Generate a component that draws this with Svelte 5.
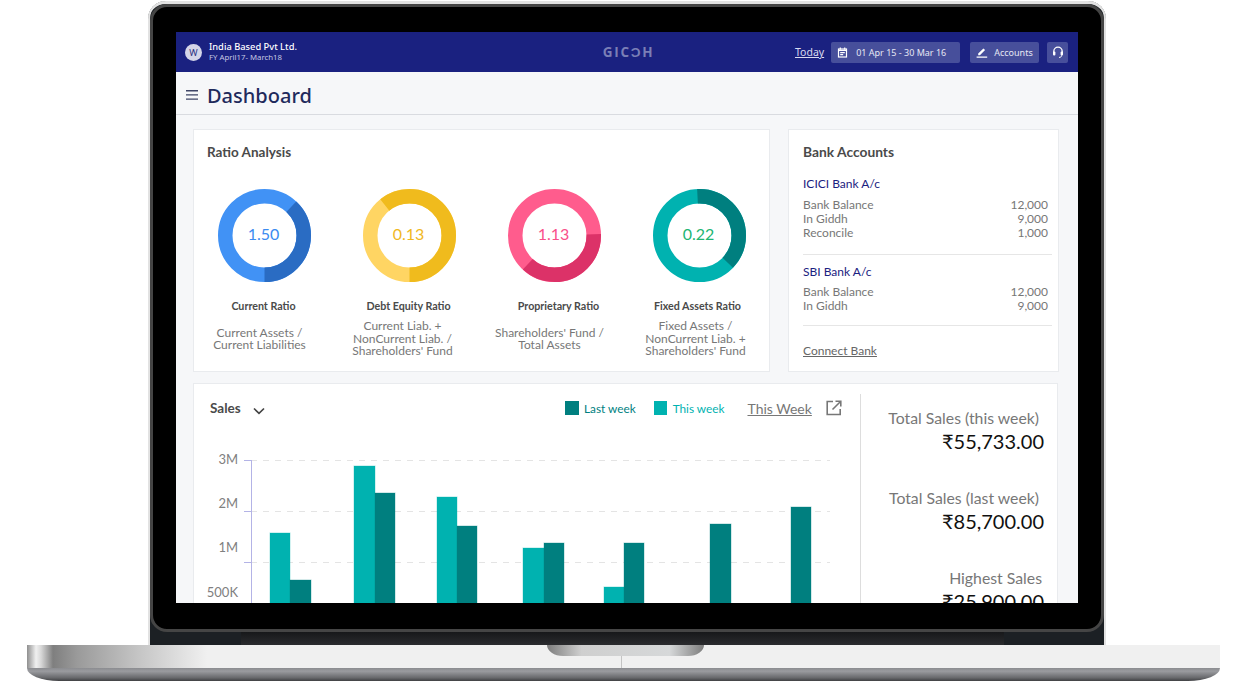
<script lang="ts">
	const ratios = [
		{ name: 'Current Ratio', value: '1.50', color: '#3b8bf0', light: '#4192f5', dark: '#2a6cc3', from: 43, to: 180, nameShift: -1, shift: -5, sub: ['Current Assets /', 'Current Liabilities'] },
		{ name: 'Debt Equity Ratio', value: '0.13', color: '#f0b81f', light: '#ffd563', dark: '#f0bb1d', from: 321, to: 540, nameShift: -1, shift: -7, sub: ['Current Liab. +', 'NonCurrent Liab. /', "Shareholders' Fund"] },
		{ name: 'Proprietary Ratio', value: '1.13', color: '#f9508a', light: '#ff5c8d', dark: '#dc3268', from: 88, to: 223, nameShift: 4, shift: -5, sub: ["Shareholders' Fund /", 'Total Assets'] },
		{ name: 'Fixed Assets Ratio', value: '0.22', color: '#22b573', light: '#00b2b0', dark: '#007f7f', from: 357, to: 494, nameShift: -2, shift: -4, sub: ['Fixed Assets /', 'NonCurrent Liab. +', "Shareholders' Fund"] }
	];

	const banks = [
		{ name: 'ICICI Bank A/c', rows: [['Bank Balance', '12,000'], ['In Giddh', '9,000'], ['Reconcile', '1,000']] },
		{ name: 'SBI Bank A/c', rows: [['Bank Balance', '12,000'], ['In Giddh', '9,000']] }
	];

	// x position and top of each bar, in chart coordinates
	const bars = [
		{ x: 76, y: 103, w: 20, c: '#00b2b0' },
		{ x: 96, y: 150, w: 21, c: '#007f7f' },
		{ x: 160, y: 36, w: 21, c: '#00b2b0' },
		{ x: 181, y: 63, w: 20, c: '#007f7f' },
		{ x: 243, y: 67, w: 20, c: '#00b2b0' },
		{ x: 263, y: 96, w: 20, c: '#007f7f' },
		{ x: 329, y: 118, w: 21, c: '#00b2b0' },
		{ x: 350, y: 113, w: 20, c: '#007f7f' },
		{ x: 410, y: 157, w: 20, c: '#00b2b0' },
		{ x: 430, y: 113, w: 20, c: '#007f7f' },
		{ x: 516, y: 94, w: 21, c: '#007f7f' },
		{ x: 597, y: 77, w: 20, c: '#007f7f' }
	];

	const axis = [
		{ label: '3M', text: 34, tick: 30 },
		{ label: '2M', text: 78, tick: 81 },
		{ label: '1M', text: 122, tick: 132 },
		{ label: '500K', text: 167 }
	];

	const totals = [
		{ label: 'Total Sales (this week)', amount: '₹55,733.00', inset: 5 },
		{ label: 'Total Sales (last week)', amount: '₹85,700.00', inset: 5 },
		{ label: 'Highest Sales', amount: '₹25,900.00', inset: 2 }
	];
</script>

<div class="device">
	<div class="lid">
		<div class="bezel">
			<div class="screen">
				<header class="topbar">
					<div class="company">
						<span class="avatar">W</span>
						<div>
							<div class="company-name">India Based Pvt Ltd.</div>
							<div class="company-fy">FY April17- March18</div>
						</div>
					</div>
					<div class="logo">GICƆH</div>
					<div class="actions">
						<span class="today">Today</span>
						<span class="btn date">
							<svg width="11" height="11" viewBox="0 0 11 11" fill="none" stroke="#fff" stroke-width="1.2">
								<rect x="1.5" y="2" width="8" height="8" />
								<path d="M1.5 3.4h8M3.3 .6v2M7.7 .6v2M3.2 5.6h4.6M3.2 7.6h3" />
							</svg>
							01 Apr 15 - 30 Mar 16
						</span>
						<span class="btn accounts">
							<svg width="12" height="11" viewBox="0 0 12 11" fill="#fff">
								<path d="M.6 9.6h10.6v1.1H.6zM2.2 6.6 7.4 1.4l1.7 1.7-5.2 5.2H2.2z" />
							</svg>
							Accounts
						</span>
						<span class="btn help">
							<svg width="12" height="13" viewBox="0 0 12 13" fill="none">
								<path d="M1.8 7V5.4a4.2 4.2 0 0 1 8.4 0V7" stroke="#fff" stroke-width="1.3" />
								<rect x="1" y="5.6" width="2.4" height="4" rx="1" fill="#fff" />
								<rect x="8.6" y="5.6" width="2.4" height="4" rx="1" fill="#fff" />
								<path d="M9.6 9.4c0 1.4-1 2-2.6 2" stroke="#fff" stroke-width="1" />
							</svg>
						</span>
					</div>
				</header>

				<div class="subbar">
					<svg width="12" height="10" viewBox="0 0 12 10" fill="#3d4466">
						<path d="M0 0h12v1.4H0zM0 4.2h12v1.4H0zM0 8.4h12v1.4H0z" />
					</svg>
					<h1>Dashboard</h1>
				</div>

				<main class="content">
					<section class="card ratio-card">
						<h2>Ratio Analysis</h2>
						<div class="ratios">
							{#each ratios as r}
								<div class="ratio">
									<svg class="donut" width="93" height="93" viewBox="0 0 93 93" fill="none">
										<circle cx="46.5" cy="46.5" r="39.25" stroke={r.light} stroke-width="14.5" />
										<circle
											cx="46.5"
											cy="46.5"
											r="39.25"
											stroke={r.dark}
											stroke-width="14.5"
											pathLength="360"
											stroke-dasharray="{r.to - r.from} {360 - (r.to - r.from)}"
											stroke-dashoffset={-r.from}
											transform="rotate(-90 46.5 46.5)"
										/>
										<text x="45.5" y="51" text-anchor="middle" fill={r.color}>{r.value}</text>
									</svg>
									<div class="ratio-name" style="transform: translateX({r.nameShift}px)">{r.name}</div>
									<div class="ratio-sub" style="transform: translateX({r.shift}px)">
										{#each r.sub as line}
											<div>{line}</div>
										{/each}
									</div>
								</div>
							{/each}
						</div>
					</section>

					<section class="card bank-card">
						<h2>Bank Accounts</h2>
						{#each banks as bank}
							<div class="bank">
								<div class="bank-name">{bank.name}</div>
								{#each bank.rows as row}
									<div class="bank-row"><span>{row[0]}</span><span>{row[1]}</span></div>
								{/each}
							</div>
						{/each}
						<span class="connect">Connect Bank</span>
					</section>

					<section class="card sales-card">
						<div class="sales-main">
							<div class="sales-head">
								<span class="sales-title">Sales</span>
								<svg class="chevron" width="12" height="8" viewBox="0 0 12 8" fill="none" stroke="#444" stroke-width="1.7">
									<path d="M1 1.5 6 6.3l5-4.8" />
								</svg>
								<div class="legend">
									<span class="swatch last"></span><span class="legend-last">Last week</span>
									<span class="swatch this"></span><span class="legend-this">This week</span>
								</div>
								<span class="range">This Week</span>
								<svg class="open" width="16" height="16" viewBox="0 0 16 16" fill="none" stroke="#777" stroke-width="1.6">
									<path d="M7 1.5H1.2v13h13V9M6.5 9.5 14.3 1.7M9.5 1.2h5.3v5.3" />
								</svg>
							</div>
							<svg class="chart" width="666" height="180" viewBox="0 0 666 180">
								{#each axis as a}
									<text class="axis-label" x="44" y={a.text} text-anchor="end">{a.label}</text>
									{#if a.tick}
										<line x1="57" x2="636" y1={a.tick + 0.5} y2={a.tick + 0.5} stroke="#e4e4e4" stroke-dasharray="6 6" />
										<line x1="50" x2="57" y1={a.tick + 0.5} y2={a.tick + 0.5} stroke="#b3b3e6" />
									{/if}
								{/each}
								<line x1="57.5" x2="57.5" y1="30" y2="180" stroke="#b3b3e6" />
								{#each bars as b}
									<rect x={b.x} y={b.y} width={b.w} height={180 - b.y} fill={b.c} stroke={b.c} stroke-opacity="0.35" />
								{/each}
							</svg>
						</div>
						<aside class="totals">
							{#each totals as t}
								<div class="total">
									<div class="total-label" style="margin-right: {t.inset}px">{t.label}</div>
									<div class="total-amount">{t.amount}</div>
								</div>
							{/each}
						</aside>
					</section>
				</main>
			</div>
		</div>
		<div class="hinge"></div>
	</div>
	<div class="base">
		<div class="notch"></div>
		<div class="base-top"><span class="seam"></span></div>
		<div class="base-bottom"></div>
	</div>
</div>

<style>
	:global(body) {
		margin: 0;
		background: #fff;
	}

	.device {
		width: 1248px;
		height: 700px;
		overflow: hidden;
		font-family: Lato, sans-serif;
	}

	.lid {
		box-sizing: border-box;
		width: 958px;
		height: 644px;
		margin: 1px 0 0 148px;
		padding: 3px 2px 0;
		background: #1c2024;
		border-radius: 18px 18px 0 0;
		box-shadow: inset 2px 0 0 #e2e2e2, inset -2px 0 0 #e2e2e2, inset 0 3px 0 #e2e2e2;
	}

	.bezel {
		box-sizing: border-box;
		height: 628px;
		padding: 25px 23px 0;
		background: #000;
		border: 3px solid #454545;
		border-radius: 17px;
	}

	.screen {
		width: 902px;
		height: 571px;
		overflow: hidden;
		background: #f6f7f9;
	}

	.hinge {
		height: 13px;
		margin: 0 100px 0 91px;
		background: linear-gradient(#17181a, #2a2b2e);
	}

	.base {
		position: relative;
		width: 1193px;
		margin-left: 27px;
	}

	.base-top {
		position: relative;
		height: 23px;
		background: linear-gradient(90deg, #8f8f8f 0, #f0f0f0 9px, #d8d8d8 14px, #7f7f7f 26px, #9a9a9a 50px, #c4c4c4 110px, #f0f0f0 180px);
	}

	.base-bottom {
		height: 13px;
		background: linear-gradient(#8b8c90 0, #9a9b9f 25%, #68696c 75%, #3f4043 100%);
		border-radius: 0 0 32px 32px / 0 0 13px 13px;
	}

	.notch {
		position: absolute;
		z-index: 1;
		top: 0;
		left: 520px;
		width: 157px;
		height: 11px;
		background: linear-gradient(90deg, #7d7d7d, #cfcfcf 22%, #d6d8d9 78%, #7d7d7d);
		border-radius: 0 0 16px 16px / 0 0 11px 11px;
	}

	.seam {
		position: absolute;
		left: 594px;
		top: 11px;
		width: 1px;
		height: 12px;
		background: #c4c4c4;
	}

	.topbar {
		display: flex;
		align-items: center;
		justify-content: space-between;
		height: 40px;
		padding: 0 9px 0 9px;
		background: #1a2180;
		font-family: 'Noto Sans', sans-serif;
		color: #fff;
	}

	.company {
		display: flex;
		align-items: center;
		gap: 7px;
		width: 276px;
	}

	.avatar {
		display: flex;
		align-items: center;
		justify-content: center;
		width: 17px;
		height: 17px;
		border-radius: 50%;
		background: #d4d5e8;
		color: #2a3080;
		font-size: 9px;
	}

	.company-name {
		font-size: 9.3px;
		font-weight: 500;
		line-height: 11px;
	}

	.company-fy {
		font-size: 7.8px;
		line-height: 11px;
		color: #c6c8e2;
	}

	.logo {
		font-family: 'Open Sans', sans-serif;
		font-size: 13.5px;
		font-weight: 700;
		letter-spacing: 1.7px;
		color: #7a7fb6;
	}

	.actions {
		display: flex;
		align-items: center;
		width: 273px;
		font-size: 9px;
	}

	.today {
		margin: 0 7px 0 -1px;
		font-size: 10.5px;
		color: #d9dbf0;
		text-decoration: underline;
	}

	.btn {
		box-sizing: border-box;
		display: flex;
		align-items: center;
		height: 21px;
		background: #474f9b;
		border-radius: 2px;
		color: #e6e7f4;
	}

	.date {
		gap: 8px;
		width: 129px;
		padding-left: 6px;
	}

	.accounts {
		gap: 6px;
		width: 69px;
		margin: 0 8px 0 10px;
		padding-left: 6px;
	}

	.help {
		justify-content: center;
		width: 21px;
	}

	.subbar {
		box-sizing: border-box;
		display: flex;
		align-items: center;
		gap: 9px;
		height: 43px;
		padding: 4px 0 0 10px;
		border-bottom: 1px solid #d9dbe0;
	}

	h1 {
		margin: 0;
		font-family: 'Noto Sans', sans-serif;
		font-size: 20px;
		font-weight: 500;
		color: #1f2a5c;
	}

	.content {
		display: grid;
		grid-template-columns: 577px 271px;
		grid-template-rows: 243px 300px;
		gap: 11px 18px;
		padding: 14px 0 0 17px;
	}

	.card {
		box-sizing: border-box;
		background: #fff;
		border: 1px solid #e9ebee;
	}

	h2 {
		margin: 0;
		font-size: 13.5px;
		font-weight: 700;
		line-height: 18px;
		color: #4a4a4a;
	}

	.ratio-card {
		padding: 13px 0 0 13px;
	}

	.ratios {
		display: flex;
		margin: 28px 0 0 -15px;
	}

	.ratio {
		flex: none;
		display: flex;
		flex-direction: column;
		align-items: center;
		width: 145px;
	}

	.donut text {
		font-size: 16px;
	}

	.ratio-name {
		margin-top: 17px;
		font-size: 10.7px;
		font-weight: 700;
		line-height: 13px;
		color: #4a4a4a;
	}

	.ratio-sub {
		display: flex;
		flex-direction: column;
		justify-content: center;
		height: 38px;
		margin-top: 8px;
		font-size: 12px;
		line-height: 12.5px;
		text-align: center;
		color: #777;
	}

	.bank-card {
		padding: 13px 0 0 14px;
	}

	.bank-card h2 {
		font-size: 13.8px;
	}

	.bank {
		margin: 15px 6px 0 0;
		padding-bottom: 14px;
		border-bottom: 1px solid #e6e6e6;
		font-size: 12px;
		color: #777;
	}

	.bank + .bank {
		margin-top: 9px;
		padding-bottom: 12px;
	}

	.bank-name {
		margin-bottom: 7px;
		line-height: 15px;
		color: #1a2180;
	}

	.bank + .bank .bank-name {
		margin-bottom: 6px;
	}

	.bank-row {
		display: flex;
		justify-content: space-between;
		padding-right: 4px;
		line-height: 14px;
	}

	.connect {
		display: block;
		margin-top: 17px;
		font-size: 12px;
		line-height: 15px;
		color: #666;
		text-decoration: underline;
	}

	.sales-card {
		grid-column: 1 / -1;
		display: flex;
		width: 865px;
	}

	.sales-main {
		width: 666px;
	}

	.sales-head {
		display: flex;
		align-items: center;
		height: 18px;
		margin-top: 15px;
		padding-left: 16px;
	}

	.sales-title {
		width: 43px;
		font-size: 13.5px;
		font-weight: 700;
		color: #4a4a4a;
	}

	.chevron {
		margin-top: 5px;
	}

	.legend {
		display: flex;
		align-items: center;
		margin-left: 300px;
		font-size: 11.8px;
	}

	.swatch {
		width: 14px;
		height: 14px;
		margin-right: 5px;
	}

	.swatch.last {
		background: #007f7f;
	}

	.swatch.this {
		width: 13px;
		margin: 0 6px 0 18px;
		background: #00b2b0;
	}

	.legend-last {
		color: #007f7f;
	}

	.legend-this {
		color: #00b2b0;
	}

	.range {
		margin-left: 23px;
		font-size: 14px;
		color: #777;
		text-decoration: underline;
	}

	.open {
		margin-left: 14px;
	}

	.chart {
		display: block;
		margin-top: 13px;
	}

	.axis-label {
		font-size: 13px;
		fill: #808080;
	}

	.totals {
		flex: 1;
		margin-top: 10px;
		padding: 14px 13px 0 0;
		border-left: 1px solid #ddd;
		text-align: right;
	}

	.total {
		height: 79.8px;
	}

	.total-label {
		font-size: 15.8px;
		line-height: 20px;
		color: #777;
	}

	.total-amount {
		font-size: 20px;
		line-height: 26px;
		color: #111;
	}
</style>
